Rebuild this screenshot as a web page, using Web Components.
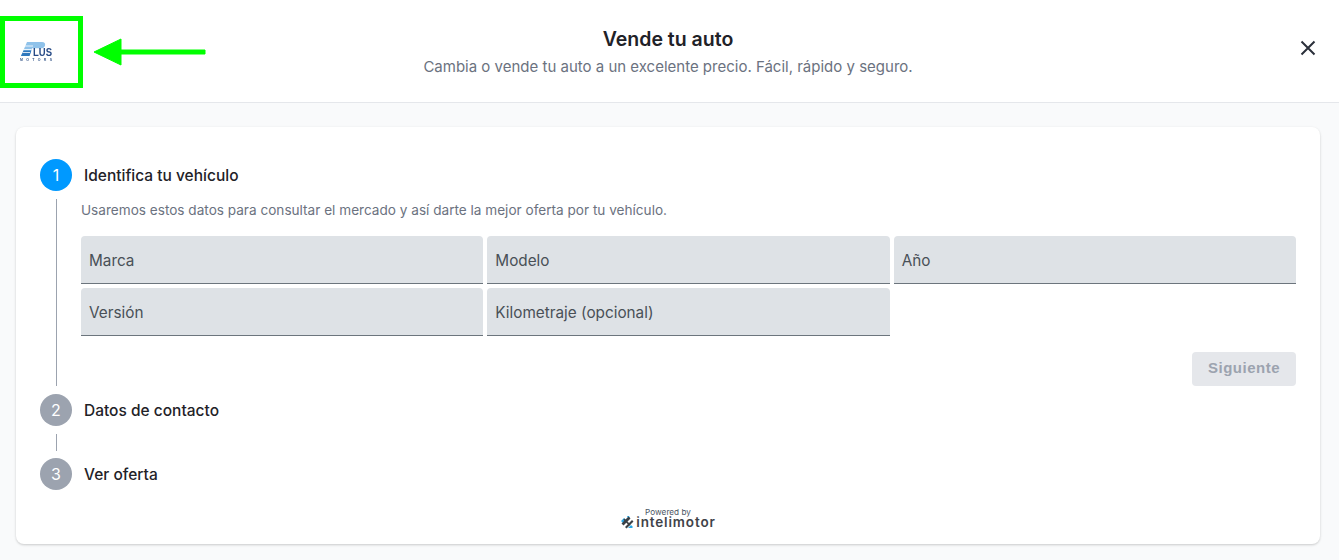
<!doctype html>
<html lang="es">
<head>
<meta charset="utf-8">
<title>Vende tu auto</title>
<style>
  html, body { margin: 0; height: 100%; }
  body {
    background: #f9fafb;
    font-family: Inter, "Liberation Sans", sans-serif;
    color: #1f2937;
    overflow: hidden;
  }
</style>
</head>
<body>
<sell-header>
  <span slot="title">Vende tu auto</span>
  <span slot="subtitle">Cambia o vende tu auto a un excelente precio. Fácil, rápido y seguro.</span>
</sell-header>
<sell-card>
  <sell-step number="1" active>
    <span slot="title">Identifica tu vehículo</span>
    <p class="intro" style="margin:0 0 16px;font-size:13.6px;line-height:20px;color:#6b7280">Usaremos estos datos para consultar el mercado y así darte la mejor oferta por tu vehículo.</p>
    <vehicle-form>
      <text-field>Marca</text-field>
      <text-field>Modelo</text-field>
      <text-field>Año</text-field>
      <text-field>Versión</text-field>
      <text-field>Kilometraje (opcional)</text-field>
    </vehicle-form>
  </sell-step>
  <sell-step number="2" line-height="17">
    <span slot="title">Datos de contacto</span>
  </sell-step>
  <sell-step number="3" last>
    <span slot="title">Ver oferta</span>
  </sell-step>
  <powered-by></powered-by>
</sell-card>
<logo-callout></logo-callout>

<script>
class SellHeader extends HTMLElement {
  constructor() {
    super();
    this.attachShadow({ mode: "open" }).innerHTML = `
      <style>
        :host {
          display: grid;
          grid-template-columns: 1fr auto 1fr;
          align-items: center;
          height: 102px;
          padding: 0 16px;
          background: #fff;
          border-bottom: 1px solid #e5e7eb;
        }
        .logo { display: flex; align-items: center; padding: 0 0 0 4px; }
        .mid { text-align: center; padding: 2px 3px 0 0; }
        .title { font-size: 19.5px; line-height: 28px; font-weight: 600; color: #1f2228; }
        .sub { font-size: 15px; line-height: 24px; padding-top: 2px; color: #6b7280; }
        .close { justify-self: end; display: flex; margin: 0 3px 6px 0; }
      </style>
      <div class="logo"><plus-logo></plus-logo></div>
      <div class="mid">
        <div class="title"><slot name="title"></slot></div>
        <div class="sub"><slot name="subtitle"></slot></div>
      </div>
      <div class="close">
        <svg width="24" height="24" viewBox="0 0 24 24" fill="none" stroke="#2b303b" stroke-width="2">
          <path d="M5.500 5.500l13 13M18.500 5.500l-13 13"/>
        </svg>
      </div>`;
  }
}

class PlusLogo extends HTMLElement {
  constructor() {
    super();
    this.attachShadow({ mode: "open" }).innerHTML = `
      <style>
        :host { display: block; width: 34px; height: 20px; font-family: "Liberation Sans", sans-serif; }
        svg { display: block; filter: blur(.25px); }
        text { font-weight: 700; }
      </style>
      <svg width="34" height="20" viewBox="0 0 34 20">
        <path d="M7 1h15c2.500 0 3.500 1.500 3 3.500-.4 1.500-1.300 2.500-3 2.800H12L9.500 15H1z" fill="#8fc2ea"/>
        <path d="M3.600 9.500h7.800L9.500 15H1z" fill="#2f78bd"/>
        <path d="M5 5h8M3.500 8.500h8M2.500 11.500h7.500" stroke="#fff" stroke-width=".8"/>
        <text x="13" y="15" font-size="11" fill="#264a86" textLength="19" lengthAdjust="spacingAndGlyphs">LUS</text>
        <text x="0" y="19.500" font-size="3.500" fill="#3a5a8c" textLength="32">MOTORS</text>
      </svg>`;
  }
}

class SellCard extends HTMLElement {
  constructor() {
    super();
    this.attachShadow({ mode: "open" }).innerHTML = `
      <style>
        :host {
          display: block;
          box-sizing: border-box;
          width: 1304px;
          height: 417px;
          margin: 24px 0 0 16px;
          padding: 32px 24px 0;
          background: #fff;
          border-radius: 8px;
          box-shadow: 0 1px 3px rgba(0,0,0,.12), 0 1px 2px rgba(0,0,0,.08);
        }
      </style>
      <slot></slot>`;
  }
}

class SellStep extends HTMLElement {
  constructor() {
    super();
    const active = this.hasAttribute("active");
    const last = this.hasAttribute("last");
    const lineH = this.getAttribute("line-height");
    this.attachShadow({ mode: "open" }).innerHTML = `
      <style>
        :host {
          display: grid;
          grid-template-columns: 32px 1fr;
          column-gap: 12px;
          align-items: center;
        }
        .dot {
          width: 32px;
          height: 32px;
          border-radius: 50%;
          display: flex;
          align-items: center;
          justify-content: center;
          font-size: 16px;
          color: #fff;
          background: ${active ? "#0099ff" : "#9ca3af"};
        }
        .title { font-size: 15.5px; line-height: 20px; padding-top: 1px; font-weight: 500; color: #1f2228; }
        .rail {
          display: ${last ? "none" : "flex"};
          justify-content: center;
          padding: 8px 0 ${active ? "8px" : "7px"};
          align-self: stretch;
        }
        .rail i { display: block; width: 1px; background: #9ca3af; ${lineH ? `height:${lineH}px;` : ""} }
        .body { margin-left: -3px; padding: ${active ? "9px 0 8px" : "8px 0 0"}; min-width: 0; display: ${last ? "none" : "block"}; }
      </style>
      <div class="dot">${this.getAttribute("number")}</div>
      <div class="title"><slot name="title"></slot></div>
      <div class="rail"><i></i></div>
      <div class="body"><slot></slot></div>`;
  }
}

class VehicleForm extends HTMLElement {
  constructor() {
    super();
    this.attachShadow({ mode: "open" }).innerHTML = `
      <style>
        :host { display: block; }
        .grid { display: grid; grid-template-columns: repeat(3, 1fr); gap: 4px; }
        .actions { display: flex; justify-content: flex-end; margin-top: 16px; }
        button {
          width: 104px;
          height: 34px;
          border: 0;
          border-radius: 4px;
          background: #e5e7eb;
          color: #9ca3af;
          font: 700 15px/20px "Liberation Sans", Arial, sans-serif;
          letter-spacing: .5px;
          padding: 0 0 2px;
        }
      </style>
      <div class="grid"><slot></slot></div>
      <div class="actions"><button disabled>Siguiente</button></div>`;
  }
}

class TextField extends HTMLElement {
  constructor() {
    super();
    this.attachShadow({ mode: "open" }).innerHTML = `
      <style>
        :host {
          display: flex;
          align-items: center;
          box-sizing: border-box;
          height: 48px;
          padding: 2px 8px 0;
          background: #dee2e6;
          border-bottom: 1px solid #6c757d;
          border-radius: 4px 4px 0 0;
          font-size: 15.3px;
          color: #495057;
        }
      </style>
      <slot></slot>`;
  }
}

class PoweredBy extends HTMLElement {
  constructor() {
    super();
    this.attachShadow({ mode: "open" }).innerHTML = `
      <style>
        :host {
          display: flex;
          flex-direction: column;
          align-items: center;
          margin-top: 18px;
          color: #3f4349;
        }
        .small { font-size: 8.2px; line-height: 8px; color: #4b5563; }
        .brand { display: flex; align-items: center; gap: 2px; height: 12px; }
        .name { font-size: 13.5px; line-height: 12px; font-weight: 600; letter-spacing: .85px; }
        svg { display: block; }
      </style>
      <div class="small">Powered by</div>
      <div class="brand">
        <svg width="14" height="14" viewBox="0 0 14 14">
          <path d="M1 6l3-3 2 2-3 3zM8 13l3-3 2 2-1 1zM7 1h2l1 2-2 0z" fill="#29a8e8"/>
          <path d="M1.500 8.500l7-7 2 2-7 7zM5 12l7-7 1.500 1.500-7 7z" fill="#3b4046"/>
          <path d="M4.500 3.500l6 6-1.200 1.200-6-6z" fill="#3b4046"/>
        </svg>
        <span class="name">intelimotor</span>
      </div>`;
  }
}

class LogoCallout extends HTMLElement {
  constructor() {
    super();
    this.attachShadow({ mode: "open" }).innerHTML = `
      <style>
        :host { position: absolute; left: 0; top: 0; width: 0; height: 0; }
        .box {
          position: absolute;
          left: 0;
          top: 16px;
          width: 83px;
          height: 72px;
          box-sizing: border-box;
          border: 5px solid #00ff00;
        }
        svg { position: absolute; left: 92px; top: 36px; }
      </style>
      <div class="box"></div>
      <svg width="116" height="32" viewBox="0 0 116 32">
        <path d="M2 16L29 3v11h84v4H29v11z" fill="#00ff00" stroke="#00ff00" stroke-width="1"/>
      </svg>`;
  }
}

customElements.define("plus-logo", PlusLogo);
customElements.define("sell-header", SellHeader);
customElements.define("sell-card", SellCard);
customElements.define("sell-step", SellStep);
customElements.define("vehicle-form", VehicleForm);
customElements.define("text-field", TextField);
customElements.define("powered-by", PoweredBy);
customElements.define("logo-callout", LogoCallout);
</script>
</body>
</html>
